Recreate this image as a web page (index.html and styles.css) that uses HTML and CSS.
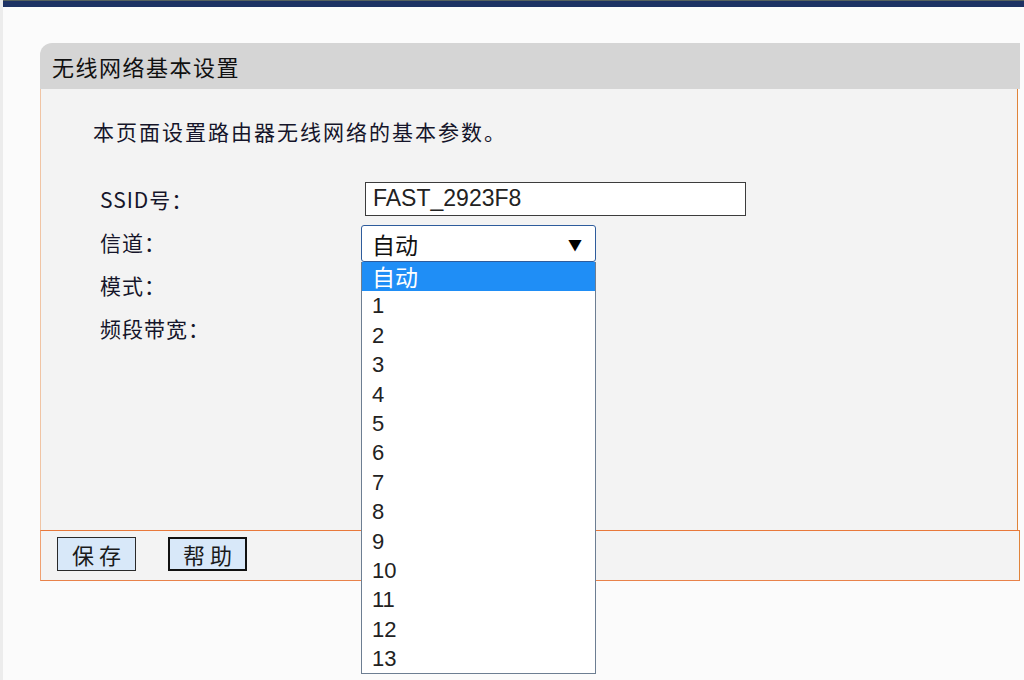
FILE: index.html
```html
<!DOCTYPE html>
<html lang="zh-CN">
<head>
    <meta charset="UTF-8">
    <title>无线网络基本设置</title>
    <link rel="stylesheet" href="styles.css">
</head>
<body>
    <div class="topbar"></div>

    <div class="panel">
        <div class="panel-title">无线网络基本设置</div>

        <div class="panel-body">
            <p class="intro">本页面设置路由器无线网络的基本参数。</p>

            <div class="form">
                <div class="label">SSID号：</div>
                <div class="field"><input class="text-input" type="text" value="FAST_2923F8"></div>

                <div class="label">信道：</div>
                <div class="field">
                    <div class="select">
                        <div class="select-box">
                            <span>自动</span>
                            <span class="arrow">▼</span>
                        </div>
                        <ul class="options">
                            <li class="selected">自动</li>
                            <li>1</li>
                            <li>2</li>
                            <li>3</li>
                            <li>4</li>
                            <li>5</li>
                            <li>6</li>
                            <li>7</li>
                            <li>8</li>
                            <li>9</li>
                            <li>10</li>
                            <li>11</li>
                            <li>12</li>
                            <li>13</li>
                        </ul>
                    </div>
                </div>

                <div class="label">模式：</div>
                <div class="field"></div>

                <div class="label">频段带宽：</div>
                <div class="field"></div>
            </div>
        </div>

        <div class="panel-footer">
            <button class="btn">保 存</button>
            <button class="btn btn-focus">帮 助</button>
        </div>
    </div>
</body>
</html>
```

FILE: styles.css
```css
body {
    margin: 0;
    background-color: #fbfbfb;
    font-family: "Noto Sans CJK SC", "Liberation Sans", sans-serif;
    color: #15152a;
    border-left: 3px solid #ececec;
    min-height: 680px;
    box-sizing: border-box;
}
.topbar {
    height: 6px;
    background-color: #1d3264;
    border-top: 1px solid #56625e;
}
.panel {
    margin: 36px 0 0 37px;
    width: 980px;
}
.panel-title {
    height: 46px;
    line-height: 46px;
    padding-left: 12px;
    background-color: #d5d5d5;
    border-top-left-radius: 12px;
    font-size: 22px;
    letter-spacing: 1.5px;
    color: #111;
}
.panel-body {
    height: 441px;
    width: 978px;
    box-sizing: border-box;
    background-color: #f3f3f3;
    border-left: 1px solid #f0c4a4;
    border-right: 1px solid #e0843a;
    padding-top: 27px;
}
.intro {
    margin: 0 0 32px 52px;
    font-size: 21px;
    letter-spacing: 2px;
    line-height: 30px;
}
.form {
    display: grid;
    grid-template-columns: 261px 1fr;
    grid-auto-rows: 43px;
    padding-left: 59px;
}
.label {
    font-size: 21px;
    letter-spacing: 1px;
    line-height: 43px;
}
.field {
    display: flex;
    align-items: center;
}
.text-input {
    margin: 0 0 2px 4px;
    width: 381px;
    height: 34px;
    box-sizing: border-box;
    border: 1px solid #3c3c3c;
    background: #fff;
    padding: 0 7px;
    font-family: "Liberation Sans", sans-serif;
    font-size: 23px;
    color: #222;
}
.select {
    position: relative;
    width: 235px;
    margin-top: 2px;
}
.select-box {
    height: 37px;
    box-sizing: border-box;
    border: 1px solid #2e5c9c;
    border-radius: 3px;
    background: #fff;
    display: flex;
    justify-content: space-between;
    align-items: center;
    padding: 0 13px 0 10px;
    font-size: 23px;
    color: #111;
}
.arrow {
    font-size: 14px;
    color: #000;
}
.options {
    position: absolute;
    top: 100%;
    left: 0;
    width: 100%;
    box-sizing: border-box;
    margin: 0;
    padding: 0;
    list-style: none;
    background: #fff;
    border: 1px solid #6d7e92;
    border-top: none;
    z-index: 2;
}
.options li {
    height: 29.4px;
    line-height: 29.4px;
    padding-left: 10px;
    font-family: "Liberation Sans", "Noto Sans CJK SC", sans-serif;
    font-size: 22px;
    color: #222;
}
.options li.selected {
    background-color: #1f8ef6;
    color: #fff;
    font-family: "Noto Sans CJK SC", sans-serif;
    font-size: 23px;
}
.panel-footer {
    width: 980px;
    height: 51px;
    box-sizing: border-box;
    background-color: #f3f3f3;
    border: 1px solid #e8824a;
    border-top: 1px solid #e8783a;
    border-right-color: #e0843a;
    border-left-color: #f0a070;
    padding: 6px 0 0 16px;
    display: flex;
    gap: 32px;
    align-items: flex-start;
}
.btn {
    width: 79px;
    height: 34px;
    background-color: #d8e8f9;
    border: 1px solid #2a2a2a;
    font-family: "Noto Sans CJK SC", sans-serif;
    font-size: 22px;
    color: #1a1a1a;
    padding: 0;
    line-height: 30px;
}
.btn-focus {
    border: 2px solid #111;
}
```
